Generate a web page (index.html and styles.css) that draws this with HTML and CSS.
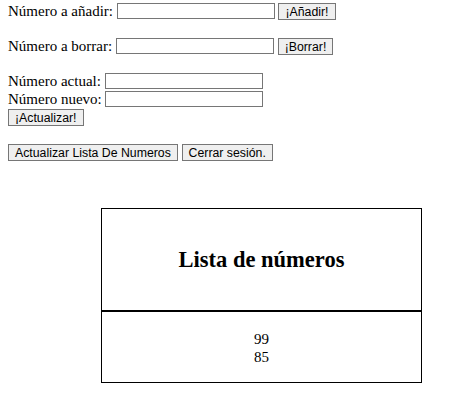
FILE: index.html
```html
<!DOCTYPE html>
<html lang="es">
<head>
  <meta charset="UTF-8" />
  <title>Lista de números</title>
  <link rel="stylesheet" href="styles.css">
</head>
<body>

  <!-- Añadir -->
  <form class="row-form">
    <label>Número a añadir: <input type="text" name="nuevo" /></label>
    <button type="button">¡Añadir!</button>
  </form>

  <!-- Borrar -->
  <form class="row-form">
    <label>Número a borrar: <input type="text" name="borrar" /></label>
    <button type="button">¡Borrar!</button>
  </form>

  <!-- Actualizar -->
  <form class="row-form">
    <label>Número actual: <input type="text" name="actual" /></label><br>
    <label>Número nuevo: <input type="text" name="nuevo" /></label><br>
    <button type="button">¡Actualizar!</button>
  </form>

  <div class="actions">
    <button type="button">Actualizar Lista De Numeros</button>
    <button type="button">Cerrar sesión.</button>
  </div>

  <div class="lista">
    <div class="lista-header">
      <h2>Lista de números</h2>
    </div>
    <div class="lista-body">
      99<br>
      85
    </div>
  </div>

</body>
</html>
```
FILE: styles.css
```css
body {
  margin: 2px 8px 8px;
  font-family: "Liberation Serif", "Times New Roman", serif;
  font-size: 15px;
  line-height: 18px;
  color: #000;
  background: #fff;
}

.row-form {
  margin: 0 0 17px 0;
}

input {
  box-sizing: border-box;
  width: 158px;
  height: 16px;
  margin: 1px 0 0 0;
  padding: 1px 2px;
  border: 1px solid #767676;
  font-family: "Liberation Sans", Arial, sans-serif;
  font-size: 12px;
  vertical-align: top;
}

button {
  box-sizing: border-box;
  height: 17px;
  margin: 1px 0 0 0;
  padding: 0 6px;
  border: 1px solid #767676;
  border-radius: 0;
  background: #efefef;
  color: #000;
  font-family: "Liberation Sans", Arial, sans-serif;
  font-size: 12.3px;
  line-height: 14px;
  vertical-align: top;
}

.actions {
  margin-bottom: 47px;
}

/* Lista */
.lista {
  width: 321px;
  margin-left: 93px;
  border: 1px solid #000;
  box-sizing: border-box;
}

.lista-header {
  height: 101px;
  display: flex;
  align-items: center;
  justify-content: center;
  border-bottom: 2px solid #000;
}

.lista-header h2 {
  margin: 0;
  font-size: 22.5px;
}

.lista-body {
  padding: 18px 0 16px;
  text-align: center;
}
```
